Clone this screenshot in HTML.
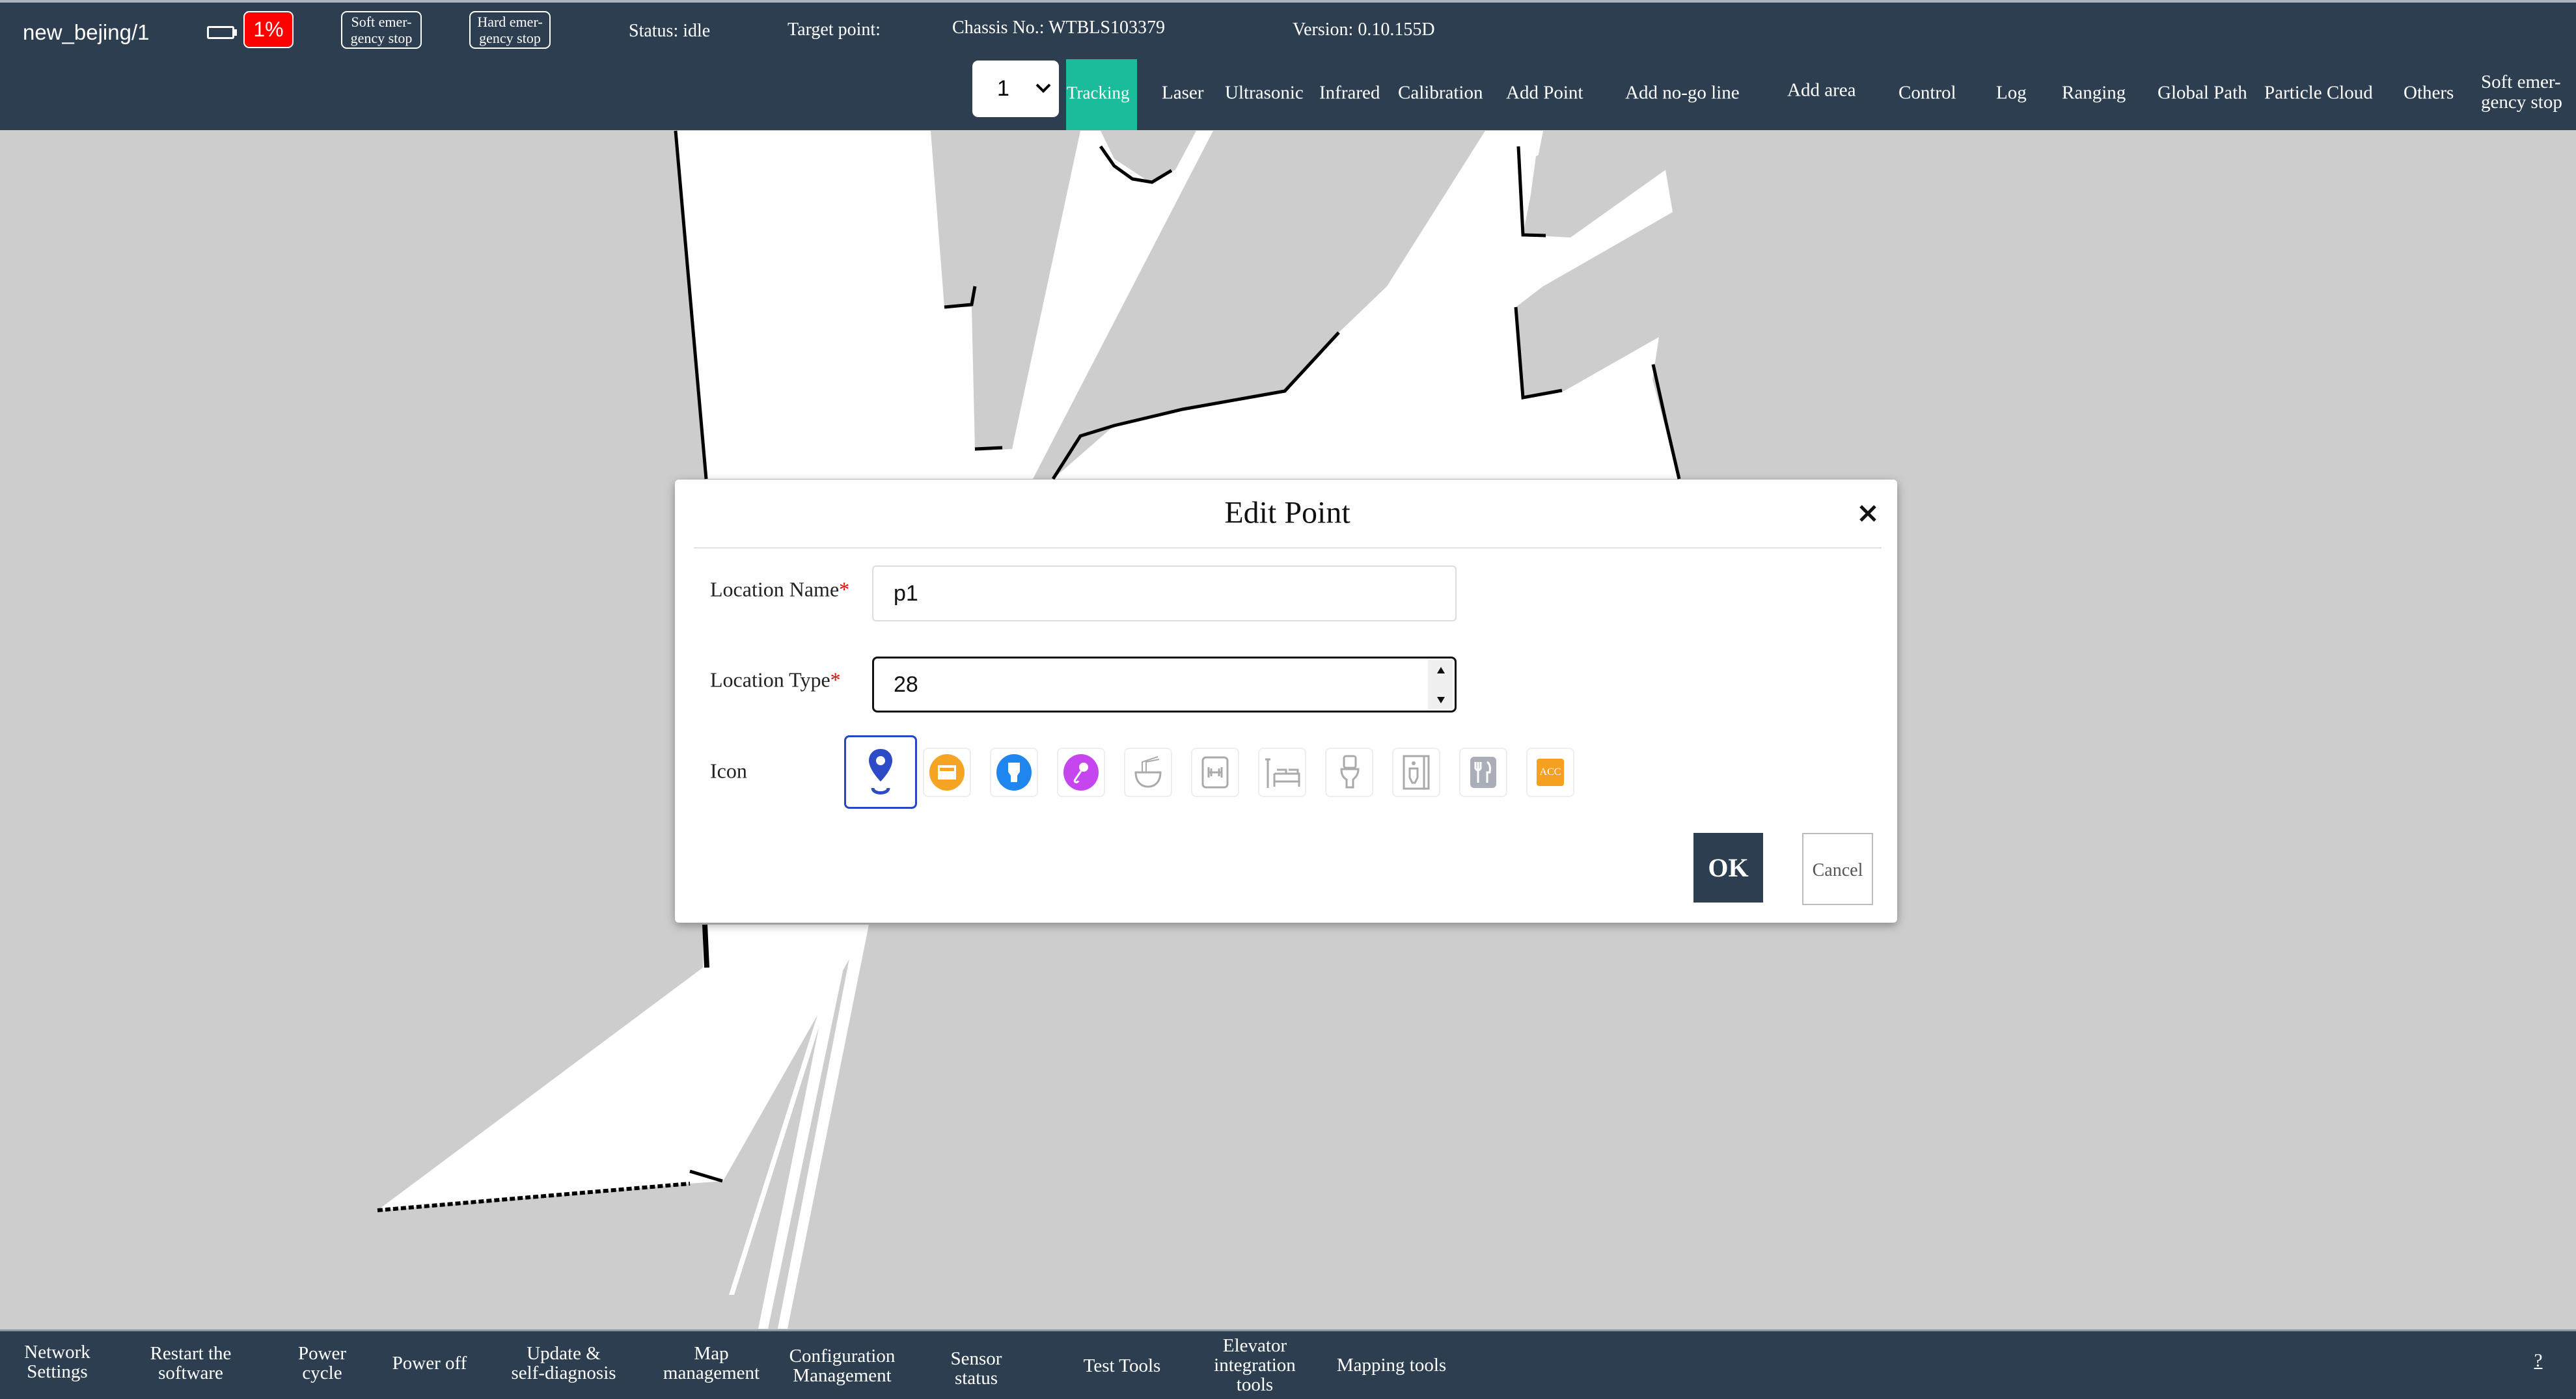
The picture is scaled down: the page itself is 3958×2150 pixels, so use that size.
<!DOCTYPE html>
<html><head><meta charset="utf-8"><style>
*{margin:0;padding:0;box-sizing:border-box}
body{width:3958px;height:2150px;position:relative;overflow:hidden;background:#cdcdcd;font-family:"Liberation Serif",serif;color:#fff}
.a{position:absolute;white-space:nowrap}
.hdr{position:absolute;left:0;top:0;width:3958px;height:200px;background:#2c3e50;border-top:4px solid #aab4bd}
.nav{position:absolute;top:143px;transform:translateY(-50%);font-size:29px;white-space:nowrap}
.bot{position:absolute;left:0;top:2043px;width:3958px;height:107px;background:#2c3e50;border-top:3px solid #8a97a3}
.bi{position:absolute;transform:translate(-50%,-50%);font-size:29px;line-height:30px;text-align:center;white-space:nowrap}
.dlg{position:absolute;left:1037px;top:737px;width:1878px;height:681px;background:#fff;border-radius:6px;box-shadow:0 4px 14px rgba(0,0,0,.35);color:#222}
.lbl{position:absolute;font-size:32px;color:#222;transform:translateY(-50%)}
.ib{position:absolute;top:412px;width:74px;height:76px;border:2px solid #eceef1;border-radius:8px;display:flex;align-items:center;justify-content:center}
</style></head><body>

<svg class="a" style="left:0;top:0" width="3958" height="2150" viewBox="0 0 3958 2150">
<polygon fill="#fff" points="1038,201 2371,201 2340,361 2413,365 2559,261 2570,326 2371,440 2329,472 2340,611 2403,601 2549,518 2539,583 2580,736 1085,736"/>
<polygon fill="#cdcdcd" points="1430,201 1660,201 1555,690 1498,693 1493,472 1451,472"/>
<polygon fill="#cdcdcd" points="1691,201 1712,244 1765,279 1806,261 1838,201"/>
<polygon fill="#cdcdcd" points="1864,201 2282,201 2131,440 2057,511 1974,601 1817,629 1712,654 1618,736 1587,736"/>
<polygon fill="#cdcdcd" points="2360,240 2440,201 2520,201 2420,340 2345,350"/>
<polyline fill="none" stroke="#000" stroke-width="5" points="1038,201 1085,736"/>
<polyline fill="none" stroke="#000" stroke-width="5" points="1618,736 1660,670 1712,654 1817,629 1974,601 2057,511"/>
<polyline fill="none" stroke="#000" stroke-width="5" points="1691,225 1712,255 1740,275 1770,280 1800,262"/>
<polyline fill="none" stroke="#000" stroke-width="5" points="1451,472 1493,468 1498,440"/>
<polyline fill="none" stroke="#000" stroke-width="5" points="1498,690 1540,688"/>
<polyline fill="none" stroke="#000" stroke-width="5" points="2333,225 2340,361 2375,362"/>
<polyline fill="none" stroke="#000" stroke-width="5" points="2329,472 2340,611 2400,600"/>
<polyline fill="none" stroke="#000" stroke-width="5" points="2540,560 2560,650 2580,736"/>
<polygon fill="#fff" points="1080,1421 1335,1421 1111,1815 1060,1819 580,1860 1080,1487"/>
<polygon fill="#fff" points="1290,1421 1310,1421 1180,2042 1165,2042"/>
<polygon fill="#fff" points="1315,1421 1335,1421 1210,2042 1195,2042"/>
<polygon fill="#fff" points="1300,1421 1308,1421 1128,1990 1120,1990"/>
<polyline fill="none" stroke="#000" stroke-width="6" stroke-dasharray="8 4" points="580,1860 1060,1819"/>
<polyline fill="none" stroke="#000" stroke-width="8" points="1083,1421 1086,1487"/>
<polyline fill="none" stroke="#000" stroke-width="5" points="1060,1800 1110,1815"/>
</svg>

<div class="hdr"></div>
<div class="a" style="left:35px;top:50px;transform:translateY(-50%);font-family:'Liberation Sans',sans-serif;font-size:33px">new_bejing/1</div>
<div class="a" style="left:318px;top:40px;width:42px;height:20px;border:3px solid #fff;border-radius:3px"></div>
<div class="a" style="left:360px;top:45px;width:4px;height:10px;background:#fff"></div>
<div class="a" style="left:374px;top:17px;width:77px;height:57px;background:#f00;border:2px solid #fff;border-radius:9px;font-family:'Liberation Sans',sans-serif;font-size:32px;text-align:center;line-height:53px">1%</div>
<div class="a" style="left:524px;top:17px;width:124px;height:58px;border:2px solid #fff;border-radius:9px;font-size:22px;line-height:25px;text-align:center;padding-top:2px">Soft emer-<br>gency stop</div>
<div class="a" style="left:721px;top:17px;width:125px;height:58px;border:2px solid #fff;border-radius:9px;font-size:22px;line-height:25px;text-align:center;padding-top:2px">Hard emer-<br>gency stop</div>
<div class="a" style="left:966px;top:48px;transform:translateY(-50%);font-size:28px">Status: idle</div>
<div class="a" style="left:1210px;top:46px;transform:translateY(-50%);font-size:28px">Target point:</div>
<div class="a" style="left:1463px;top:43px;transform:translateY(-50%);font-size:28px">Chassis No.: WTBLS103379</div>
<div class="a" style="left:1986px;top:46px;transform:translateY(-50%);font-size:28px">Version: 0.10.155D</div>

<div class="a" style="left:1494px;top:93px;width:133px;height:87px;background:#fff;border-radius:9px;color:#000;font-family:'Liberation Sans',sans-serif;font-size:34px;line-height:87px;padding-left:38px">1</div>
<svg class="a" style="left:1590px;top:127px" width="26" height="18" viewBox="0 0 26 18"><polyline points="3,3 13,13 23,3" fill="none" stroke="#000" stroke-width="4"/></svg>
<div class="a" style="left:1638px;top:91px;width:109px;height:109px;background:#1abc9c"></div>
<div class="nav" style="left:1639px;font-size:27px">Tracking</div>
<div class="nav" style="left:1785px">Laser</div>
<div class="nav" style="left:1882px">Ultrasonic</div>
<div class="nav" style="left:2027px">Infrared</div>
<div class="nav" style="left:2148px">Calibration</div>
<div class="nav" style="left:2314px">Add Point</div>
<div class="nav" style="left:2497px">Add no-go line</div>
<div class="nav" style="left:2746px;top:139px">Add area</div>
<div class="nav" style="left:2917px">Control</div>
<div class="nav" style="left:3067px">Log</div>
<div class="nav" style="left:3168px">Ranging</div>
<div class="nav" style="left:3315px">Global Path</div>
<div class="nav" style="left:3479px">Particle Cloud</div>
<div class="nav" style="left:3693px">Others</div>
<div class="nav" style="left:3812px;top:142px;line-height:31px">Soft emer-<br>gency stop</div>

<div class="dlg">
<div class="a" style="left:941px;top:51px;transform:translate(-50%,-50%);font-size:48px;color:#111">Edit Point</div>
<svg class="a" style="left:1818px;top:37px" width="30" height="30" viewBox="0 0 30 30"><path d="M4 4L26 26M26 4L4 26" stroke="#111" stroke-width="5"/></svg>
<div class="a" style="left:29px;top:104px;width:1825px;height:2px;background:#e2e2e2"></div>
<div class="lbl" style="left:54px;top:169px">Location Name<span style="color:#e00">*</span></div>
<div class="a" style="left:303px;top:132px;width:898px;height:86px;border:2px solid #ddd;border-radius:6px;font-family:'Liberation Sans',sans-serif;font-size:34px;line-height:82px;padding-left:31px;color:#111">p1</div>
<div class="lbl" style="left:54px;top:308px">Location Type<span style="color:#e00">*</span></div>
<div class="a" style="left:303px;top:272px;width:898px;height:86px;border:3px solid #111;border-radius:8px;font-family:'Liberation Sans',sans-serif;font-size:34px;line-height:80px;padding-left:30px;color:#111">28</div>
<div class="a" style="left:1157px;top:277px;width:38px;height:76px;background:#f0f0f0"></div>
<svg class="a" style="left:1160px;top:284px" width="34" height="64" viewBox="0 0 34 64"><path d="M17 4L23 14H11Z M17 60L23 50H11Z" fill="#111"/></svg>
<div class="lbl" style="left:54px;top:448px">Icon</div>

<div class="a" style="left:260px;top:393px;width:112px;height:113px;border:3px solid #2746c2;border-radius:8px"></div>
<svg class="a" style="left:296px;top:412px" width="40" height="76" viewBox="0 0 40 76"><path d="M20 2C9 2 2 10 2 20C2 34 20 52 20 52C20 52 38 34 38 20C38 10 31 2 20 2Z" fill="#2e4bc7"/><circle cx="20" cy="20" r="7" fill="#fff"/><path d="M8 62C8 72 32 72 32 62" fill="none" stroke="#2e4bc7" stroke-width="5"/></svg>
<div class="ib" style="left:381px"><svg width="56" height="58" viewBox="0 0 56 58"><ellipse cx="28" cy="29" rx="27" ry="28" fill="#f5a523"/><rect x="14" y="18" width="28" height="22" fill="#fff"/><rect x="17" y="22" width="22" height="5" fill="#f5a523"/></svg></div>
<div class="ib" style="left:484px"><svg width="56" height="58" viewBox="0 0 56 58"><ellipse cx="28" cy="29" rx="27" ry="28" fill="#1f86f0"/><path d="M19 14H37V28L33 34V44H23V34L19 28Z" fill="#fff"/></svg></div>
<div class="ib" style="left:587px"><svg width="56" height="58" viewBox="0 0 56 58"><ellipse cx="28" cy="29" rx="27" ry="28" fill="#c545ef"/><circle cx="32" cy="21" r="7" fill="#fff"/><path d="M28 27L19 40C16 44 22 46 24 42" stroke="#fff" stroke-width="3" fill="none"/></svg></div>
<div class="ib" style="left:690px"><svg width="50" height="56" viewBox="0 0 50 56"><path d="M6 28H44C44 42 36 50 25 50C14 50 6 42 6 28Z" fill="none" stroke="#aaa" stroke-width="3"/><path d="M16 28V12L40 4M22 28V12L42 8" stroke="#aaa" stroke-width="2" fill="none"/></svg></div>
<div class="ib" style="left:793px"><svg width="44" height="52" viewBox="0 0 44 52"><rect x="3" y="3" width="38" height="46" rx="5" fill="none" stroke="#aaa" stroke-width="3"/><path d="M12 26H32M12 18V34M32 18V34M16 20V32M28 20V32" stroke="#aaa" stroke-width="3"/></svg></div>
<div class="ib" style="left:896px"><svg width="60" height="56" viewBox="0 0 60 56"><path d="M8 8V52M4 8H12M18 30H56V50M18 30V50M18 42H56M22 24H36V30M40 24H54V30" stroke="#aaa" stroke-width="3" fill="none"/></svg></div>
<div class="ib" style="left:999px"><svg width="40" height="58" viewBox="0 0 40 58"><rect x="12" y="4" width="18" height="18" rx="3" fill="none" stroke="#aaa" stroke-width="3"/><path d="M8 24H34C34 34 28 38 26 40V52H16V40C12 38 8 34 8 24Z" fill="none" stroke="#aaa" stroke-width="3"/></svg></div>
<div class="ib" style="left:1102px"><svg width="44" height="56" viewBox="0 0 44 56"><rect x="3" y="3" width="38" height="50" fill="none" stroke="#aaa" stroke-width="3"/><path d="M34 3V53" stroke="#aaa" stroke-width="3"/><circle cx="18" cy="14" r="3" fill="#aaa"/><path d="M12 22H24V36L20 44H16L12 36Z" fill="none" stroke="#aaa" stroke-width="3"/></svg></div>
<div class="ib" style="left:1205px"><svg width="44" height="52" viewBox="0 0 44 52"><rect x="2" y="2" width="40" height="48" rx="6" fill="#a9aeb8"/><path d="M14 10V42M10 10V20Q14 26 18 20V10M28 10Q34 14 32 26H28V42" stroke="#fff" stroke-width="3" fill="none"/></svg></div>
<div class="ib" style="left:1308px"><div style="width:42px;height:42px;background:#f5a020;border-radius:4px;color:#fff;font-size:16px;line-height:42px;text-align:center">ACC</div></div>

<div class="a" style="left:1565px;top:543px;width:107px;height:107px;background:#2c3e50;color:#fff;font-size:40px;font-weight:bold;text-align:center;line-height:107px">OK</div>
<div class="a" style="left:1732px;top:543px;width:109px;height:111px;border:2px solid #bbb;color:#555;font-size:28px;text-align:center;line-height:111px">Cancel</div>
</div>

<div class="bot"></div>
<div class="bi" style="left:88px;top:2093px">Network<br>Settings</div>
<div class="bi" style="left:293px;top:2095px">Restart the<br>software</div>
<div class="bi" style="left:495px;top:2095px">Power<br>cycle</div>
<div class="bi" style="left:660px;top:2095px">Power off</div>
<div class="bi" style="left:866px;top:2095px">Update &amp;<br>self-diagnosis</div>
<div class="bi" style="left:1093px;top:2095px">Map<br>management</div>
<div class="bi" style="left:1294px;top:2099px">Configuration<br>Management</div>
<div class="bi" style="left:1500px;top:2103px">Sensor<br>status</div>
<div class="bi" style="left:1724px;top:2099px">Test Tools</div>
<div class="bi" style="left:1928px;top:2098px">Elevator<br>integration<br>tools</div>
<div class="bi" style="left:2138px;top:2098px">Mapping tools</div>
<div class="bi" style="left:3900px;top:2091px;text-decoration:underline">?</div>
</body></html>
